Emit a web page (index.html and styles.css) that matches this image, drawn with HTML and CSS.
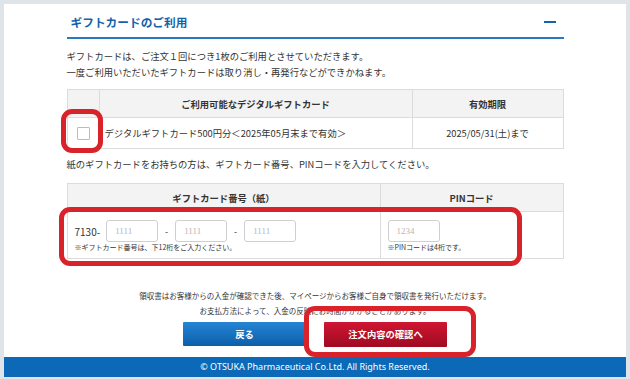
FILE: index.html
```html
<!DOCTYPE html>
<html lang="ja">
<head>
    <meta charset="UTF-8">
    <title>ギフトカードのご利用</title>
    <link rel="stylesheet" href="styles.css">
</head>
<body>
    <div class="panel">
        <div class="content">
            <div class="section-head">
                <h2>ギフトカードのご利用</h2>
                <span class="toggle"></span>
            </div>
            <p class="lead">ギフトカードは、ご注文１回につき1枚のご利用とさせていただきます。<br>一度ご利用いただいたギフトカードは取り消し・再発行などができかねます。</p>

            <table class="gift-table digital">
                <tr>
                    <th class="col-check"></th>
                    <th class="col-name">ご利用可能なデジタルギフトカード</th>
                    <th class="col-date">有効期限</th>
                </tr>
                <tr>
                    <td class="col-check"><span class="checkbox"></span></td>
                    <td class="col-name name">デジタルギフトカード500円分＜2025年05月末まで有効＞</td>
                    <td class="col-date date">2025/05/31(土)まで</td>
                </tr>
            </table>

            <p class="lead single">紙のギフトカードをお持ちの方は、ギフトカード番号、PINコードを入力してください。</p>

            <table class="gift-table paper">
                <tr>
                    <th class="col-number">ギフトカード番号（紙）</th>
                    <th class="col-pin">PINコード</th>
                </tr>
                <tr>
                    <td class="col-number">
                        <div class="field-row">
                            <span class="prefix">7130-</span>
                            <span class="input">1111</span>
                            <span class="dash">-</span>
                            <span class="input">1111</span>
                            <span class="dash">-</span>
                            <span class="input">1111</span>
                        </div>
                        <div class="hint">※ギフトカード番号は、下12桁をご入力ください。</div>
                    </td>
                    <td class="col-pin">
                        <div class="field-row">
                            <span class="input">1234</span>
                        </div>
                        <div class="hint">※PINコードは4桁です。</div>
                    </td>
                </tr>
            </table>

            <p class="notice">領収書はお客様からの入金が確認できた後、マイページからお客様ご自身で領収書を発行いただけます。<br>お支払方法によって、入金の反映にお時間がかかることがあります。</p>

            <div class="buttons">
                <a class="btn btn-back" href="#">戻る</a>
                <a class="btn btn-next" href="#">注文内容の確認へ</a>
            </div>
        </div>
        <footer>© OTSUKA Pharmaceutical Co.Ltd. All Rights Reserved.</footer>
    </div>

    <span class="mark mark-check"></span>
    <span class="mark mark-fields"></span>
    <span class="mark mark-button"></span>
</body>
</html>
```

FILE: styles.css
```css
body {
    margin: 0;
    padding: 4px 4px 3px;
    background-color: #dfe4e8;
    font-family: "Noto Sans CJK JP", "Noto Sans", sans-serif;
    color: #333;
    position: relative;
}
.panel {
    background-color: #fff;
}
.content {
    width: 497px;
    margin: 0 auto;
    padding: 0 0 10px;
}
.section-head {
    display: flex;
    justify-content: space-between;
    align-items: center;
    padding: 10px 8px 7px 4px;
    border-bottom: 2px solid #2a78bf;
}
.section-head h2 {
    margin: 0;
    font-size: 11.7px;
    line-height: 16px;
    color: #1462ad;
    font-weight: bold;
}
.toggle {
    width: 12px;
    height: 2px;
    background-color: #1462ad;
}
.lead {
    margin: 9px 0 0;
    font-size: 9.3px;
    line-height: 16px;
}
.lead.single {
    margin-top: 7px;
}
.gift-table {
    width: 497px;
    border-collapse: collapse;
    font-size: 9.3px;
    table-layout: fixed;
}
.gift-table.digital {
    margin-top: 9px;
}
.gift-table.paper {
    margin-top: 11px;
}
.gift-table th,
.gift-table td {
    border: 1px solid #dcdcdc;
    padding: 0;
}
.gift-table th {
    background-color: #f3f3f3;
    height: 27px;
    font-weight: bold;
    text-align: center;
}
.digital td {
    height: 30px;
}
.col-check {
    width: 31px;
}
.col-date {
    width: 150px;
}
.col-pin {
    width: 182px;
}
td.col-check {
    text-align: center;
}
.checkbox {
    display: inline-block;
    width: 11px;
    height: 11px;
    border: 1px solid #bcbcbc;
    border-radius: 1px;
    vertical-align: middle;
}
.name {
    padding-left: 5px !important;
}
.date {
    text-align: center;
}
.gift-table.paper td {
    vertical-align: top;
    padding: 8px 0 5px 7px;
}
.field-row {
    display: flex;
    align-items: center;
    height: 22px;
}
.prefix {
    font-size: 10px;
    margin-right: 6px;
}
.input {
    display: inline-block;
    box-sizing: border-box;
    width: 52px;
    height: 22px;
    border: 1px solid #cfcfcf;
    border-radius: 3px;
    padding-left: 8px;
    font-family: "Liberation Serif", serif;
    font-size: 9px;
    line-height: 20px;
    color: #b5b5b5;
}
.dash {
    width: 17px;
    text-align: center;
    font-size: 9px;
}
.hint {
    font-size: 7px;
    line-height: 11px;
}
.notice {
    margin: 29px 0 0;
    text-align: center;
    font-size: 7.5px;
    line-height: 15px;
}
.buttons {
    display: flex;
    justify-content: center;
    gap: 18px;
    margin-top: 4px;
}
.btn {
    display: block;
    width: 123px;
    height: 24px;
    line-height: 24px;
    text-align: center;
    color: #fff;
    font-size: 9.3px;
    font-weight: bold;
    text-decoration: none;
    border-radius: 1px;
}
.btn-back {
    background: linear-gradient(#2585d4, #0c5fa9);
}
.btn-next {
    background: linear-gradient(#cf1632, #a00a22);
    height: 25px;
}
footer {
    background-color: #0b69b7;
    color: #fff;
    text-align: center;
    height: 20px;
    line-height: 20px;
    font-size: 9px;
    font-family: "Noto Sans", sans-serif;
}
.mark {
    position: absolute;
    box-sizing: border-box;
    border: 5px solid #d8232a;
    border-radius: 11px;
}
.mark-check {
    left: 61px;
    top: 109px;
    width: 42px;
    height: 44px;
}
.mark-fields {
    left: 59px;
    top: 207px;
    width: 463px;
    height: 59px;
}
.mark-button {
    left: 304px;
    top: 306px;
    width: 172px;
    height: 51px;
}
```
